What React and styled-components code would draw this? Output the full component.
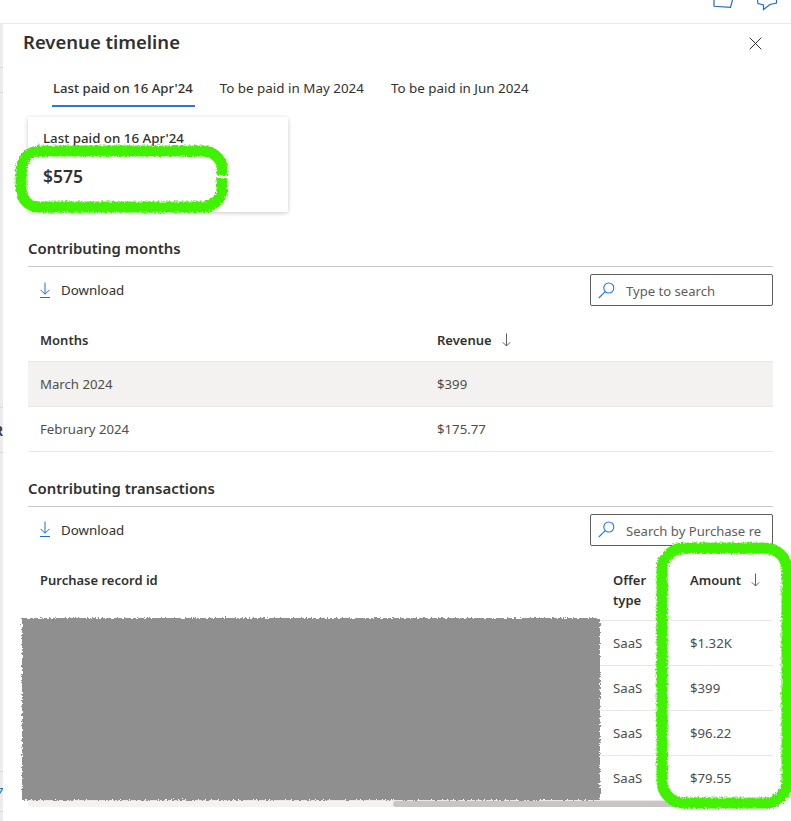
import styled, { createGlobalStyle } from "styled-components";

const months = [
  { name: "March 2024", revenue: "$399", hovered: true },
  { name: "February 2024", revenue: "$175.77" },
];

const transactions = [
  { offer: "SaaS", amount: "$1.32K" },
  { offer: "SaaS", amount: "$399" },
  { offer: "SaaS", amount: "$96.22" },
  { offer: "SaaS", amount: "$79.55" },
];

const DownloadIcon = () => (
  <svg width="12" height="17" viewBox="0 0 12 17" fill="none" stroke="#1f6fc0" strokeWidth="1">
    <path d="M6 0.5V12M1.5 7.8L6 12.3L10.5 7.8M1 15.5H11" />
  </svg>
);

const SearchIcon = () => (
  <svg width="17" height="17" viewBox="0 0 17 17" fill="none" stroke="#1f7ae0" strokeWidth="1.1">
    <circle cx="10.8" cy="6" r="5" />
    <path d="M7.2 9.6L0.8 16" />
  </svg>
);

const SortIcon = () => (
  <svg width="9" height="14" viewBox="0 0 9 14" fill="none" stroke="#605e5c" strokeWidth="1">
    <path d="M4.5 0.5V13M0.8 9.3L4.5 13L8.2 9.3" />
  </svg>
);

const CloseIcon = () => (
  <svg width="13" height="13" viewBox="0 0 13 13" fill="none" stroke="#323130" strokeWidth="1">
    <path d="M0.7 0.7L12.3 12.3M12.3 0.7L0.7 12.3" />
  </svg>
);

const Toolbar = ({ placeholder }) => (
  <ToolRow>
    <DownloadButton>
      <DownloadIcon />
      Download
    </DownloadButton>
    <SearchBox>
      <SearchIcon />
      <SearchText>{placeholder}</SearchText>
    </SearchBox>
  </ToolRow>
);

const App = () => {
  return (
    <Page>
      <GlobalStyle />
      <TopBar>
        <TopIcon width="21" height="9" viewBox="0 0 21 9">
          <path d="M1 0V6.3L17.5 7.3L19.5 0" />
        </TopIcon>
        <TopIcon width="22" height="11" viewBox="0 0 22 11">
          <path d="M1.5 0L2 3.5L7.5 5L7.5 9.5L14 4.5L20.5 3L20.5 0" />
        </TopIcon>
      </TopBar>
      <Body>
        <Behind>
          <BehindRow $h={44} />
          <BehindRow $h={25} />
          <BehindRow $h={315} />
          <BehindRow $h={45}>
            <BehindText>R</BehindText>
          </BehindRow>
          <BehindRow $h={319} />
          <BehindRow $h={40}>
            <BehindLink>7</BehindLink>
          </BehindRow>
        </Behind>
        <Panel>
          <TitleRow>
            <Title>Revenue timeline</Title>
            <CloseBox>
              <CloseIcon />
            </CloseBox>
          </TitleRow>
          <Tabs>
            <Tab $active>Last paid on 16 Apr'24</Tab>
            <Tab>To be paid in May 2024</Tab>
            <Tab>To be paid in Jun 2024</Tab>
          </Tabs>
          <Card>
            <CardLabel>Last paid on 16 Apr'24</CardLabel>
            <CardValue>$575</CardValue>
          </Card>

          <SectionTitle>Contributing months</SectionTitle>
          <Toolbar placeholder="Type to search" />
          <Table>
            <colgroup>
              <col style={{ width: 397 }} />
              <col />
            </colgroup>
            <thead>
              <tr>
                <Th $h={43}>Months</Th>
                <Th $h={43}>
                  <HeadLabel>
                    Revenue
                    <SortIcon />
                  </HeadLabel>
                </Th>
              </tr>
            </thead>
            <tbody>
              {months.map((month) => (
                <Row key={month.name} $hovered={month.hovered}>
                  <Td>{month.name}</Td>
                  <Td>{month.revenue}</Td>
                </Row>
              ))}
            </tbody>
          </Table>

          <SectionTitle>Contributing transactions</SectionTitle>
          <Toolbar placeholder="Search by Purchase re" />
          <Table>
            <colgroup>
              <col />
              <col style={{ width: 77 }} />
              <col style={{ width: 95 }} />
            </colgroup>
            <thead>
              <tr>
                <Th $h={63}>Purchase record id</Th>
                <Th $h={63}>
                  Offer
                  <br />
                  type
                </Th>
                <Th $h={63}>
                  <HeadLabel>
                    Amount
                    <SortIcon />
                  </HeadLabel>
                </Th>
              </tr>
            </thead>
            <tbody>
              {transactions.map((row) => (
                <Row key={row.amount}>
                  <Td />
                  <Td>{row.offer}</Td>
                  <Td>{row.amount}</Td>
                </Row>
              ))}
            </tbody>
          </Table>
          <ScrollTrack>
            <ScrollThumb />
          </ScrollTrack>
        </Panel>
      </Body>

      <Markup width="791" height="821" viewBox="0 0 791 821">
        <defs>
          <filter id="rough" x="-5%" y="-5%" width="110%" height="110%" colorInterpolationFilters="sRGB">
            <feTurbulence type="fractalNoise" baseFrequency="0.55" numOctaves="2" seed="4" />
            <feDisplacementMap in="SourceGraphic" scale="5" />
          </filter>
        </defs>
        <rect x="22" y="618" width="578" height="182" fill="#8f8f8f" filter="url(#rough)" />
        <g fill="none" stroke="#41f200" strokeWidth="11" filter="url(#rough)">
          <path d="M222 175V168C222 158 212 151 202 151H40C28 151 21 160 21 172V187C21 199 28 207 40 207H202C213 207 222 199 222 188V178" />
          <rect x="662" y="548" width="125" height="255" rx="22" />
        </g>
      </Markup>
    </Page>
  );
};

const GlobalStyle = createGlobalStyle`
  html, body {
    margin: 0;
    padding: 0;
    background: #fff;
    overflow: hidden;
  }
  body {
    font-family: "Noto Sans", "Open Sans", sans-serif;
    color: #323130;
  }
`;

const Page = styled.div`
  position: relative;
  width: 791px;
  height: 821px;
  overflow: hidden;
  display: flex;
  flex-direction: column;
`;

const TopBar = styled.div`
  height: 23px;
  flex: none;
  border-bottom: 1px solid #e8e8e8;
  display: flex;
  align-items: flex-start;
  justify-content: flex-end;
  gap: 22px;
  padding-right: 13px;
`;

const TopIcon = styled.svg`
  fill: none;
  stroke: #1f6fc0;
  stroke-width: 1.2;
`;

const Body = styled.div`
  flex: 1;
  display: flex;
  min-height: 0;
`;

const Behind = styled.div`
  width: 3px;
  flex: none;
  overflow: hidden;
  background: #ececec;
`;

const BehindRow = styled.div`
  height: ${(p) => p.$h}px;
  width: 3px;
  border-bottom: 1px solid #d8d8d8;
  box-sizing: border-box;
  display: flex;
  align-items: center;
  justify-content: flex-end;
`;

const BehindText = styled.span`
  font-size: 14px;
  font-weight: 600;
  color: #323130;
`;

const BehindLink = styled.span`
  font-size: 13px;
  font-style: italic;
  color: #1f6fc0;
`;

const Panel = styled.div`
  flex: 1;
  min-width: 0;
  background: #fff;
  padding: 0 18px 0 25px;
`;

const TitleRow = styled.div`
  height: 36px;
  margin-left: -5px;
  margin-right: 11px;
  display: flex;
  align-items: center;
  justify-content: space-between;
`;

const Title = styled.h1`
  margin: 0;
  font-size: 18.5px;
  line-height: 36px;
  font-weight: 600;
  color: #323130;
`;

const CloseBox = styled.span`
  display: flex;
  margin-top: 2px;
`;

const Tabs = styled.div`
  display: flex;
  gap: 24px;
  margin: 11px 0 10px 24px;
`;

const Tab = styled.div`
  height: 36px;
  line-height: 34px;
  padding: 0 2px 0 1px;
  font-size: ${(p) => (p.$active ? 13.2 : 13.4)}px;
  white-space: nowrap;
  box-sizing: border-box;
  font-weight: ${(p) => (p.$active ? 500 : 400)};
  border-bottom: 2px solid ${(p) => (p.$active ? "#2b78d4" : "transparent")};
`;

const Card = styled.div`
  width: 260px;
  height: 95px;
  box-sizing: border-box;
  padding: 12px 15px;
  border-radius: 2px;
  box-shadow: 0 1px 4px rgba(0, 0, 0, 0.22);
`;

const CardLabel = styled.div`
  font-size: 13.3px;
  line-height: 18px;
  font-weight: 500;
`;

const CardValue = styled.div`
  margin-top: 15px;
  font-size: 17.5px;
  line-height: 28px;
  font-weight: 600;
`;

const SectionTitle = styled.div`
  margin-top: 26px;
  padding-bottom: 8px;
  font-size: 14.9px;
  line-height: 20px;
  font-weight: 600;
  border-bottom: 1px solid #c8c8c8;
`;

const ToolRow = styled.div`
  height: 51px;
  box-sizing: border-box;
  padding-top: 7px;
  display: flex;
  align-items: flex-start;
  justify-content: space-between;
`;

const DownloadButton = styled.div`
  height: 32px;
  margin-left: 11px;
  display: flex;
  align-items: center;
  gap: 10px;
  font-size: 13.3px;
  color: #323130;
`;

const SearchBox = styled.div`
  width: 183px;
  height: 32px;
  box-sizing: border-box;
  border: 1px solid #605e5c;
  border-radius: 2px;
  padding: 0 7px;
  display: flex;
  align-items: center;
  gap: 11px;
`;

const SearchText = styled.span`
  padding-top: 2px;
  font-size: 13.1px;
  color: #605e5c;
  white-space: nowrap;
  overflow: hidden;
`;

const Table = styled.table`
  width: 100%;
  table-layout: fixed;
  border-collapse: collapse;
  font-size: 13.2px;
`;

const Th = styled.th`
  height: ${(p) => p.$h}px;
  padding: 12px 12px 0;
  box-sizing: border-box;
  text-align: left;
  vertical-align: top;
  font-size: 13px;
  font-weight: 600;
  line-height: 20px;
`;

const HeadLabel = styled.span`
  display: inline-flex;
  align-items: center;
  gap: 10px;
`;

const Row = styled.tr`
  height: 45px;
  border-top: 1px solid #e8e8e8;
  border-bottom: 1px solid #e8e8e8;
  background: ${(p) => (p.$hovered ? "#f3f2f1" : "transparent")};
`;

const Td = styled.td`
  padding: 0 12px;
  color: #504e4c;
`;

const ScrollTrack = styled.div`
  height: 6px;
  background: #f3f2f1;
  border-radius: 3px;
`;

const ScrollThumb = styled.div`
  height: 6px;
  margin-left: 365px;
  background: #c8c6c4;
  border-radius: 3px;
`;

const Markup = styled.svg`
  position: absolute;
  left: 0;
  top: 0;
  pointer-events: none;
`;

export default App;
